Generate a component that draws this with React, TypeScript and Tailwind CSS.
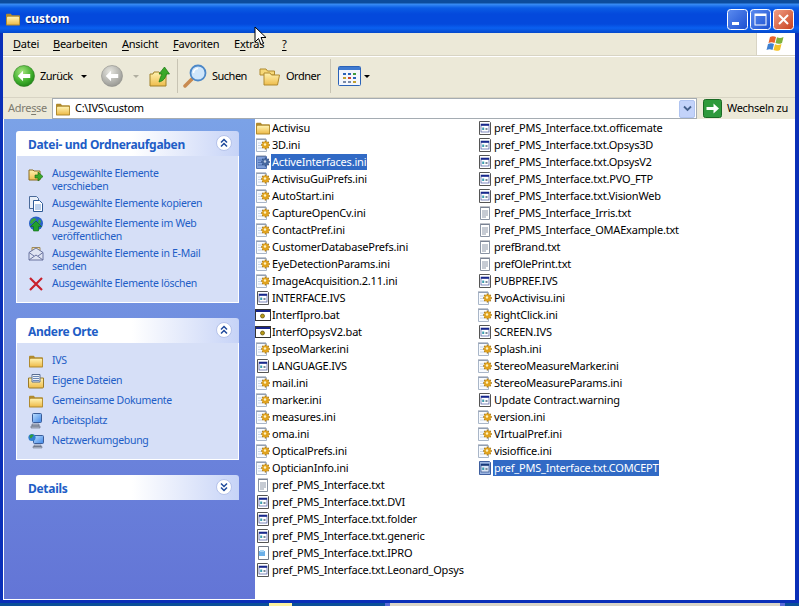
import React from 'react';

type IconProps = { selected?: boolean };

const Defs = () => (
    <svg className="absolute w-0 h-0" aria-hidden="true">
        <defs>
            <linearGradient id="fld" x1="0" y1="0" x2="0" y2="1">
                <stop offset="0" stopColor="#fff2b0" />
                <stop offset="1" stopColor="#eebc4c" />
            </linearGradient>
            <radialGradient id="grn" cx="0.4" cy="0.3" r="0.8">
                <stop offset="0" stopColor="#a6e57f" />
                <stop offset="0.6" stopColor="#3fae2c" />
                <stop offset="1" stopColor="#167a12" />
            </radialGradient>
            <radialGradient id="gry" cx="0.4" cy="0.3" r="0.8">
                <stop offset="0" stopColor="#e6e6e0" />
                <stop offset="1" stopColor="#8f8f8a" />
            </radialGradient>
            <linearGradient id="mon" x1="0" y1="0" x2="1" y2="1">
                <stop offset="0" stopColor="#bfe0ff" />
                <stop offset="1" stopColor="#3f86e6" />
            </linearGradient>
            <linearGradient id="xbtn" x1="0" y1="0" x2="1" y2="1">
                <stop offset="0" stopColor="#f0a088" />
                <stop offset="1" stopColor="#c8401c" />
            </linearGradient>
            <linearGradient id="bbtn" x1="0" y1="0" x2="1" y2="1">
                <stop offset="0" stopColor="#5c8cf0" />
                <stop offset="1" stopColor="#1a4fd0" />
            </linearGradient>
        </defs>
    </svg>
);

const FolderIcon = ({ size = 16 }: { size?: number }) => (
    <svg width={size} height={size} viewBox="0 0 16 16" className="shrink-0">
        <path d="M1 13.5V4c0-.8.5-1.2 1.2-1.2h3.6L7 4.2h6.8c.7 0 1.2.4 1.2 1.1v8.2c0 .6-.4 1-1 1H2c-.6 0-1-.4-1-1z" fill="#b08a2e" />
        <path d="M2 13.5V6.6c0-.5.3-.8.8-.8h10.6c.4 0 .7.3.7.7v7z" fill="url(#fld)" />
    </svg>
);

const IniIcon = ({ selected }: IconProps) => (
    <svg width="16" height="16" viewBox="0 0 16 16" className="shrink-0">
        <path d="M1.5 2.5h10v12h-10z" fill={selected ? '#7f9fd8' : '#f8fbff'} stroke={selected ? '#5072b4' : '#a9b6c8'} />
        <path d="M2 1v2M4 1v2M6 1v2M8 1v2M10 1v2" stroke="#77849a" strokeWidth="0.9" />
        <path d="M3 6h4M3 8.5h3M3 11h4" stroke={selected ? '#5072b4' : '#c8d4e4'} />
        <path d="M10.5 3.6v8.8M6.1 8h8.800M7.400 4.900l6.200 6.200M13.600 4.900l-6.200 6.200" stroke={selected ? '#2c4a80' : '#9a6e12'} strokeWidth="1.500" />
        <circle cx="10.500" cy="8" r="3.500" fill={selected ? '#47689f' : '#e0a21e'} />
        <circle cx="10" cy="7.500" r="1.200" fill={selected ? '#c8d4e8' : '#fff3c0'} />
    </svg>
);

const ScriptIcon = ({ selected }: IconProps) => (
    <svg width="16" height="16" viewBox="0 0 16 16" className="shrink-0">
        <path d="M2.5 1.5h10l1 1v12h-11z" fill={selected ? '#9db6e2' : '#fff'} stroke={selected ? '#3f5f9f' : '#555'} />
        <rect x="4" y="4" width="8" height="8" fill={selected ? '#dbe5f5' : '#fff'} stroke={selected ? '#17387a' : '#2a3a90'} strokeWidth="0.6" />
        <rect x="4" y="4" width="8" height="1.800" fill={selected ? '#17387a' : '#17278c'} />
        <rect x="5.200" y="7.500" width="2" height="2.500" fill="#3b9fb0" />
        <rect x="8.500" y="8" width="2" height="2" fill="#7a8a9c" />
    </svg>
);

const BatIcon = () => (
    <svg width="16" height="16" viewBox="0 0 16 16" className="shrink-0">
        <rect x="0.500" y="2.500" width="15" height="11" fill="#fff" stroke="#333" />
        <rect x="1" y="3" width="14" height="2" fill="#16248a" />
        <circle cx="7.500" cy="9" r="2" fill="#b79a16" stroke="#5a4a08" strokeWidth="0.7" />
    </svg>
);

const TxtIcon = () => (
    <svg width="16" height="16" viewBox="0 0 16 16" className="shrink-0">
        <path d="M3.500 2.500h9v12h-9z" fill="#fff" stroke="#8a94a4" />
        <path d="M4 1v2M6 1v2M8 1v2M10 1v2M12 1v2" stroke="#5f6878" strokeWidth="0.8" />
        <path d="M5 6h6M5 8h6M5 10h6M5 12h4" stroke="#8d97a8" />
    </svg>
);

const IproIcon = () => (
    <svg width="16" height="16" viewBox="0 0 16 16" className="shrink-0">
        <path d="M3.500 1.500h10v13h-10z" fill="#fff" stroke="#727a88" />
        <path d="M4 6h6v5H4z" fill="#6cb0e8" />
        <path d="M5 5h4v2H5z" fill="#a8d4f4" />
    </svg>
);

const fileIcons: Record<string, React.FC<IconProps>> = {
    folder: () => <FolderIcon />,
    ini: IniIcon,
    script: ScriptIcon,
    bat: BatIcon,
    txt: TxtIcon,
    ipro: IproIcon,
};

const column1: [string, string][] = [
    ['folder', 'Activisu'],
    ['ini', '3D.ini'],
    ['ini', 'ActiveInterfaces.ini'],
    ['ini', 'ActivisuGuiPrefs.ini'],
    ['ini', 'AutoStart.ini'],
    ['ini', 'CaptureOpenCv.ini'],
    ['ini', 'ContactPref.ini'],
    ['ini', 'CustomerDatabasePrefs.ini'],
    ['ini', 'EyeDetectionParams.ini'],
    ['ini', 'ImageAcquisition.2.11.ini'],
    ['script', 'INTERFACE.IVS'],
    ['bat', 'InterfIpro.bat'],
    ['bat', 'InterfOpsysV2.bat'],
    ['ini', 'IpseoMarker.ini'],
    ['script', 'LANGUAGE.IVS'],
    ['ini', 'mail.ini'],
    ['ini', 'marker.ini'],
    ['ini', 'measures.ini'],
    ['ini', 'oma.ini'],
    ['ini', 'OpticalPrefs.ini'],
    ['ini', 'OpticianInfo.ini'],
    ['txt', 'pref_PMS_Interface.txt'],
    ['script', 'pref_PMS_Interface.txt.DVI'],
    ['script', 'pref_PMS_Interface.txt.folder'],
    ['script', 'pref_PMS_Interface.txt.generic'],
    ['ipro', 'pref_PMS_Interface.txt.IPRO'],
    ['script', 'pref_PMS_Interface.txt.Leonard_Opsys'],
];

const column2: [string, string][] = [
    ['script', 'pref_PMS_Interface.txt.officemate'],
    ['script', 'pref_PMS_Interface.txt.Opsys3D'],
    ['script', 'pref_PMS_Interface.txt.OpsysV2'],
    ['script', 'pref_PMS_Interface.txt.PVO_FTP'],
    ['script', 'pref_PMS_Interface.txt.VisionWeb'],
    ['txt', 'Pref_PMS_Interface_Irris.txt'],
    ['txt', 'Pref_PMS_Interface_OMAExample.txt'],
    ['txt', 'prefBrand.txt'],
    ['txt', 'prefOlePrint.txt'],
    ['script', 'PUBPREF.IVS'],
    ['ini', 'PvoActivisu.ini'],
    ['ini', 'RightClick.ini'],
    ['script', 'SCREEN.IVS'],
    ['ini', 'Splash.ini'],
    ['ini', 'StereoMeasureMarker.ini'],
    ['ini', 'StereoMeasureParams.ini'],
    ['script', 'Update Contract.warning'],
    ['ini', 'version.ini'],
    ['ini', 'VIrtualPref.ini'],
    ['ini', 'visioffice.ini'],
    ['script', 'pref_PMS_Interface.txt.COMCEPT'],
];

const selectedNames = ['ActiveInterfaces.ini', 'pref_PMS_Interface.txt.COMCEPT'];

const FileColumn = ({ items, width }: { items: [string, string][]; width: string }) => (
    <div className={`flex flex-col tracking-[-0.2px] ${width}`}>
        {items.map(([type, name]) => {
            const Icon = fileIcons[type];
            const selected = selectedNames.includes(name);
            return (
                <div key={name} className="flex items-center h-[17px]">
                    <Icon selected={selected} />
                    <span className={`px-px leading-[16px] h-[16px] whitespace-nowrap ${selected ? 'bg-[#316ac5] text-white' : 'text-black'}`}>
                        {name}
                    </span>
                </div>
            );
        })}
    </div>
);

const Chevrons = ({ up }: { up: boolean }) => (
    <svg width="16" height="16" viewBox="0 0 16 16">
        <circle cx="8" cy="8" r="7.500" fill="#fff" stroke="#b4c2ea" />
        <path
            d={up ? 'M5 7.500l3-3 3 3M5 11.500l3-3 3 3' : 'M5 4.500l3 3 3-3M5 8.500l3 3 3-3'}
            fill="none"
            stroke="#1f4a9c"
            strokeWidth="1.500"
        />
    </svg>
);

const Panel = ({ title, up, children }: { title: string; up: boolean; children?: React.ReactNode }) => (
    <div className="flex flex-col">
        <div className="h-[25px] flex items-center justify-between pl-3 pr-[7px] rounded-t-[3px] bg-[linear-gradient(90deg,#ffffff_0%,#ffffff_52%,#e4eafb_75%,#c6d3f7_100%)]">
            <span className="font-bold text-[12px] text-[#215dc6] pt-[3px] tracking-[-0.3px]">{title}</span>
            <span className="mb-[2px]"><Chevrons up={up} /></span>
        </div>
        {children && (
            <div className="bg-[#d6dff7] border border-t-0 border-white pt-[10px] pb-[6px] pl-[11px] pr-2 flex flex-col">
                {children}
            </div>
        )}
    </div>
);

const TaskItem = ({ icon, label, tall }: { icon: React.ReactNode; label: string; tall?: boolean }) => (
    <div className={`flex gap-2 text-[#215dc6] text-[10.5px] tracking-[-0.3px] leading-[13px] ${tall ? 'h-[30px]' : 'h-[20px]'}`}>
        <span className="w-4 h-4 shrink-0">{icon}</span>
        <span className="w-[160px] pt-px">{label}</span>
    </div>
);

const MoveIcon = () => (
    <svg width="16" height="16" viewBox="0 0 16 16">
        <path d="M1 14V4h4l1 1h6v9z" fill="url(#fld)" stroke="#8a6a20" />
        <path d="M7 9h3V6l5 4.500-5 4.500v-3H7z" fill="#3aa82a" stroke="#14660e" strokeWidth="0.6" />
    </svg>
);

const CopyIcon = () => (
    <svg width="16" height="16" viewBox="0 0 16 16">
        <path d="M1.500 0.500h7l2 2v10h-9z" fill="#e8eef8" stroke="#4a6a9a" />
        <path d="M5.500 4.500h6l3 3v8h-9z" fill="#fff" stroke="#2f5a96" />
        <path d="M7 9h6M7 11h6M7 13h6" stroke="#7ba2d8" />
    </svg>
);

const WebIcon = () => (
    <svg width="16" height="16" viewBox="0 0 16 16">
        <circle cx="8" cy="7.500" r="7" fill="#2a62c8" />
        <path d="M3 4c2-2 4-2 5-1 0 2-3 2-3 4-1 1-2 1-3 0zM11 3l2 2-1 3-2-2z" fill="#38a838" />
        <path d="M8 5l5.500 5.500H10.500V15h-5v-4.500H2.500z" fill="#22a02a" stroke="#0e6a16" strokeWidth="0.6" />
    </svg>
);

const MailIcon = () => (
    <svg width="16" height="16" viewBox="0 0 16 16">
        <path d="M4 6V1.500h8V6z" fill="#f6e0a8" stroke="#a08a5a" />
        <path d="M1 6.500L8 2l7 4.500V14H1z" fill="#dfe4f2" stroke="#6a74a0" />
        <path d="M1 14l7-5 7 5M1 6.500L6 10M15 6.500L10 10" fill="none" stroke="#6a74a0" />
    </svg>
);

const DeleteIcon = () => (
    <svg width="16" height="16" viewBox="0 0 16 16">
        <path d="M2 2l12 12M14 2L2 14" stroke="#c8202c" strokeWidth="2.200" />
    </svg>
);

const DocsIcon = () => (
    <svg width="16" height="16" viewBox="0 0 16 16">
        <path d="M0.500 14V5h15v9c0 .6-.4 1-1 1h-13c-.6 0-1-.4-1-1z" fill="url(#fld)" stroke="#9a7a28" />
        <path d="M4 1.500h8V9H4z" fill="#eef2f8" stroke="#5a6e92" />
        <path d="M5 3.500h6M5 5.500h6M5 7.500h6" stroke="#6a88b8" />
    </svg>
);

const ComputerIcon = () => (
    <svg width="16" height="16" viewBox="0 0 16 16">
        <rect x="4.500" y="0.500" width="9" height="9" rx="1" fill="url(#mon)" stroke="#3a5c98" />
        <path d="M4 11h7v2H4zM3 13h9v2H3z" fill="#b4bccc" stroke="#5a6478" strokeWidth="0.6" />
    </svg>
);

const NetworkIcon = () => (
    <svg width="16" height="16" viewBox="0 0 16 16">
        <rect x="5.500" y="2.500" width="10" height="8" rx="1" fill="url(#mon)" stroke="#3a5c98" />
        <path d="M6 12h7v1.500H6zM5 13.500h9V15H5z" fill="#b4bccc" stroke="#5a6478" strokeWidth="0.5" />
        <circle cx="4" cy="4.500" r="3.600" fill="#2f7fd0" />
        <path d="M1.500 3c1-1.500 3-2 4-1 0 1.500-1.500 1.500-2 3-1 .500-1.500 0-2-2z" fill="#2f9e36" />
    </svg>
);

const Dropdown = ({ color = 'border-t-black' }: { color?: string }) => (
    <span className={`w-0 h-0 border-x-[3px] border-x-transparent border-t-[3px] ${color}`} />
);

const RoundArrow = ({ fill, ring }: { fill: string; ring: string }) => (
    <svg width="22" height="22" viewBox="0 0 23 23" className="shrink-0">
        <circle cx="11.500" cy="11.500" r="11" fill={fill} stroke={ring} strokeWidth="0.6" />
        <path d="M5 11.500l5.500-5.500v3.500h7.500v4h-7.500V17z" fill="#fff" />
    </svg>
);

const Mnemonic = ({ before, letter, after }: { before?: string; letter: string; after?: string }) => (
    <span>{before}<span className="underline underline-offset-2">{letter}</span>{after}</span>
);

const MenuBar = () => (
    <div className="h-[23px] flex bg-[#ece9d8] border-b border-[#d8d4c4]">
        <div className="flex-1 flex items-center pl-[10px] text-black tracking-[-0.25px]">
            <span className="w-[40px]"><Mnemonic letter="D" after="atei" /></span>
            <span className="w-[69px]"><Mnemonic letter="B" after="earbeiten" /></span>
            <span className="w-[51px]"><Mnemonic letter="A" after="nsicht" /></span>
            <span className="w-[61px]"><Mnemonic letter="F" after="avoriten" /></span>
            <span className="w-[48px]"><Mnemonic before="E" letter="x" after="tras" /></span>
            <Mnemonic letter="?" />
        </div>
        <div className="w-[39px] bg-white border-l border-[#d8d4c4] flex items-center justify-center">
            <svg width="21" height="18" viewBox="0 0 21 18">
                <path d="M4 2c2-1.200 4-1 6 0l-1.500 6c-2-1-4-1-6 0z" fill="#e8622c" />
                <path d="M11 2.200c2 1 4 1 6.500-.2L16 8c-2.500 1.200-4.500 1-6.500 0z" fill="#7fb23a" />
                <path d="M2 9c2-1 4-1 6 0l-1.500 6c-2-1-4-1-6 0z" fill="#3f80d0" />
                <path d="M9 9.200c2 1 4 1 6.500-.2L14 15c-2.500 1.200-4.500 1-6.500 0z" fill="#f4c228" />
            </svg>
        </div>
    </div>
);

const Toolbar = () => (
    <div className="h-[41px] flex items-center bg-[#ece9d8] border-t border-white pb-[2px] pl-[10px] text-black tracking-[-0.5px]">
        <RoundArrow fill="url(#grn)" ring="#2a7a1e" />
        <span className="ml-[5px] w-[41px]">Zurück</span>
        <Dropdown />
        <span className="w-[14px]" />
        <RoundArrow fill="url(#gry)" ring="#8a8a86" />
        <span className="w-[10px]" />
        <Dropdown color="border-t-[#b0aea0]" />
        <span className="w-[9px]" />
        <svg width="24" height="24" viewBox="0 0 24 24" className="shrink-0">
            <path d="M2 22V10h3l1-2h5l2 2h5v12z" fill="url(#fld)" stroke="#a08028" />
            <path d="M11 18c1-4 2-6 3-8h-3l5.500-7 5 7h-3c-1 4-3 7-7.500 8z" fill="#3aa82a" stroke="#14760e" strokeWidth="0.7" />
        </svg>
        <span className="w-[5px]" />
        <span className="w-px h-[34px] bg-[#c8c4b4]" />
        <span className="w-[5px]" />
        <svg width="25" height="25" viewBox="0 0 25 25" className="shrink-0">
            <path d="M9 15L2 22" stroke="#c88a50" strokeWidth="3.500" strokeLinecap="round" />
            <circle cx="15" cy="9" r="7.500" fill="#cfe6fb" stroke="#4c88c8" strokeWidth="1.800" />
            <path d="M10.500 9a4.500 4.500 0 0 1 4.500-4.500" stroke="#fff" strokeWidth="1.500" fill="none" />
        </svg>
        <span className="ml-[4px] w-[47px]">Suchen</span>
        <svg width="22" height="22" viewBox="0 0 22 22" className="shrink-0">
            <path d="M1 4h6l1.500 2h7v4H1z" fill="#f6d878" stroke="#b08a2e" />
            <path d="M5 8h6l1.500 2h8l-2 10H5z" fill="url(#fld)" stroke="#b08a2e" />
        </svg>
        <span className="ml-[5px] w-[44px]">Ordner</span>
        <span className="w-px h-[34px] bg-[#c8c4b4]" />
        <span className="w-[7px]" />
        <svg width="23" height="20" viewBox="0 0 23 20" className="shrink-0">
            <rect x="0.500" y="0.500" width="22" height="19" rx="1" fill="#f4f6fc" stroke="#2a62b8" />
            <rect x="1" y="1" width="21" height="3" fill="#3f7ad0" />
            <path d="M5 7h3v2H5z M10 7h3v2h-3z" fill="#2a62b8" />
            <path d="M15 7h3v2h-3z" fill="#3a9a3a" />
            <path d="M5 11h3v2H5z" fill="#c0a030" />
            <path d="M10 11h3v2h-3z" fill="#c84830" />
            <path d="M15 11h3v2h-3z" fill="#2a62b8" />
            <path d="M5 15h3v2H5z M10 15h3v2h-3z" fill="#7a8aa8" />
            <path d="M15 15h3v2h-3z" fill="#c0a030" />
        </svg>
        <span className="w-[3px]" />
        <Dropdown />
    </div>
);

const AddressBar = () => (
    <div className="h-[22px] flex items-center bg-[#ece9d8] border-t border-[#d8d4c4] text-black tracking-[-0.3px]">
        <span className="w-[49px] pl-[5px] text-[#7d7b6f]">Adre<span className="underline underline-offset-2">s</span>se</span>
        <div className="w-[645px] h-[21px] bg-white border border-[#a5acb2] flex items-center pl-[2px] justify-between">
            <div className="flex items-center gap-[4px]">
                <FolderIcon />
                <span>C:\IVS\custom</span>
            </div>
            <div className="w-[16px] h-[18px] mr-px rounded-[2px] bg-[#c3d3fa] border border-[#b0c4f0] flex items-center justify-center">
                <svg width="9" height="7" viewBox="0 0 9 7">
                    <path d="M1 1.500l3.500 3.500L8 1.500" fill="none" stroke="#44608c" strokeWidth="1.800" />
                </svg>
            </div>
        </div>
        <span className="w-[6px]" />
        <svg width="19" height="19" viewBox="0 0 19 19" className="shrink-0">
            <rect x="0.500" y="0.500" width="18" height="18" rx="2" fill="#2f9a3c" stroke="#1a6a24" />
            <path d="M3.500 8h7V4.500L16 9.500l-5.500 5V11h-7z" fill="#fff" />
        </svg>
        <span className="ml-[5px] whitespace-nowrap">Wechseln zu</span>
    </div>
);

const Sidebar = () => (
    <div className="w-[252px] shrink-0 border-l border-white pl-[12px] pt-[12px] flex flex-col bg-[linear-gradient(180deg,#7ba2e7_0%,#6375d6_100%)]">
        <div className="w-[223px] flex flex-col gap-[15px]">
            <Panel title="Datei- und Ordneraufgaben" up>
                <TaskItem icon={<MoveIcon />} label="Ausgewählte Elemente verschieben" tall />
                <TaskItem icon={<CopyIcon />} label="Ausgewählte Elemente kopieren" />
                <TaskItem icon={<WebIcon />} label="Ausgewählte Elemente im Web veröffentlichen" tall />
                <TaskItem icon={<MailIcon />} label="Ausgewählte Elemente in E-Mail senden" tall />
                <TaskItem icon={<DeleteIcon />} label="Ausgewählte Elemente löschen" />
            </Panel>
            <Panel title="Andere Orte" up>
                <TaskItem icon={<FolderIcon />} label="IVS" />
                <TaskItem icon={<DocsIcon />} label="Eigene Dateien" />
                <TaskItem icon={<FolderIcon />} label="Gemeinsame Dokumente" />
                <TaskItem icon={<ComputerIcon />} label="Arbeitsplatz" />
                <TaskItem icon={<NetworkIcon />} label="Netzwerkumgebung" />
            </Panel>
            <Panel title="Details" up={false} />
        </div>
    </div>
);

const TitleButton = ({ fill, children }: { fill: string; children: React.ReactNode }) => (
    <svg width="21" height="21" viewBox="0 0 21 21" className="shrink-0">
        <rect x="0.500" y="0.500" width="20" height="20" rx="3" fill={fill} stroke="#fff" />
        {children}
    </svg>
);

const TitleBar = () => (
    <div className="h-[33px] flex items-center pl-[5px] pr-[5px] pt-[5px] bg-[linear-gradient(180deg,#0c4c9c_0px,#0c4c9c_3px,#3a8ef4_4px,#0a5ce4_8px,#0449dc_14px,#0449dc_24px,#0a60f0_28px,#0448cc_33px)]">
        <FolderIcon />
        <span className="ml-[4px] font-bold text-[12px] text-white [text-shadow:1px_1px_0_#0a2a80]">custom</span>
        <div className="ml-auto flex gap-[2px]">
            <TitleButton fill="url(#bbtn)">
                <rect x="5" y="13" width="7" height="3" fill="#fff" />
            </TitleButton>
            <TitleButton fill="url(#bbtn)">
                <rect x="5" y="5" width="11" height="11" fill="none" stroke="#fff" />
                <rect x="5" y="5" width="11" height="2" fill="#fff" />
            </TitleButton>
            <TitleButton fill="url(#xbtn)">
                <path d="M6 6l9 9M15 6l-9 9" stroke="#fff" strokeWidth="2" />
            </TitleButton>
        </div>
    </div>
);

const BottomStrip = () => (
    <div className="h-[3px] flex bg-[#0a4f9a]">
        <span className="w-[269px]" />
        <span className="w-[23px] bg-[#fdf2a0]" />
        <span className="w-[93px]" />
        <span className="w-[5px] bg-[#5a6ad8]" />
        <span className="w-[390px] bg-[#d8d4c8]" />
        <span className="w-[5px] bg-[#5a6ad8]" />
    </div>
);

const App: React.FC = () => (
    <div className="relative w-[799px] h-[606px] overflow-hidden flex flex-col text-[11px] font-['Noto_Sans',sans-serif] bg-[#0a4f9a]">
        <Defs />
        <TitleBar />
        <div className="h-[570px] flex flex-col border-l-[3px] border-r-[4px] border-b-[3px] border-[#0a2fb8]">
            <MenuBar />
            <Toolbar />
            <AddressBar />
            <div className="flex-1 flex min-h-0 border-b border-white bg-white">
                <Sidebar />
                <div className="flex-1 flex">
                    <FileColumn items={column1} width="w-[222px]" />
                    <FileColumn items={column2} width="w-[300px]" />
                </div>
            </div>
        </div>
        <BottomStrip />
        <svg width="13" height="20" viewBox="0 0 13 20" className="absolute left-[254px] top-[26px]">
            <path d="M1 1v15l3.500-3.500 2.500 6 2.500-1-2.500-6h5z" fill="#fff" stroke="#000" />
        </svg>
    </div>
);

export default App;
